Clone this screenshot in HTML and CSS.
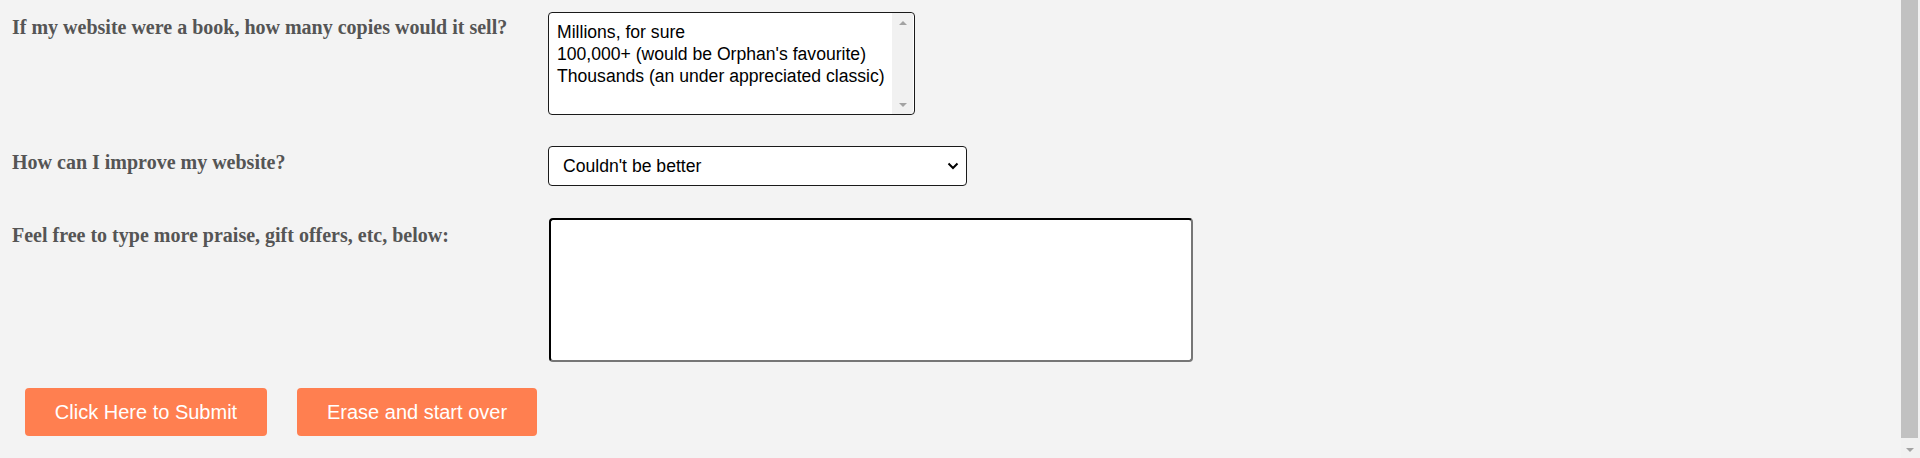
FILE: index.html
```html
<!DOCTYPE html>
<html lang="en">
<head>
<meta charset="utf-8">
<title>Feedback</title>
<link rel="stylesheet" href="styles.css">
</head>
<body>
<form class="form">
  <div class="row row-books">
    <label class="label" for="copies">If my website were a book, how many copies would it sell?</label>
    <div class="listbox-wrap">
      <select class="listbox" id="copies" multiple size="5">
        <option>Millions, for sure</option>
        <option>100,000+ (would be Orphan's favourite)</option>
        <option>Thousands (an under appreciated classic)</option>
      </select>
      <div class="list-scroll" aria-hidden="true">
        <span class="arrow arrow-up"></span>
        <span class="arrow arrow-down"></span>
      </div>
    </div>
  </div>
  <div class="row row-improve">
    <label class="label" for="improve">How can I improve my website?</label>
    <div class="dropdown-wrap">
      <select class="dropdown" id="improve">
        <option>Couldn't be better</option>
      </select>
      <svg class="chevron" width="12" height="8" viewBox="0 0 12 8" aria-hidden="true">
        <path d="M1.5 1.5 L6 6 L10.5 1.5" fill="none" stroke="#000" stroke-width="2"/>
      </svg>
    </div>
  </div>
  <div class="row row-praise">
    <label class="label" for="praise">Feel free to type more praise, gift offers, etc, below:</label>
    <textarea class="textbox" id="praise"></textarea>
  </div>
  <div class="actions">
    <button type="submit" class="btn btn-submit">Click Here to Submit</button>
    <button type="reset" class="btn btn-reset">Erase and start over</button>
  </div>
</form>
<div class="page-scroll" aria-hidden="true">
  <div class="page-thumb"></div>
  <span class="arrow arrow-down page-arrow"></span>
</div>
</body>
</html>
```

FILE: styles.css
```css
html {
  background: #f3f3f3;
}
body {
  margin: 0;
  background: #f3f3f3;
  font-family: "Liberation Serif", "Times New Roman", serif;
}
.form {
  padding: 12px 0 20px 12px;
  display: flex;
  flex-direction: column;
}
.row {
  display: flex;
  align-items: flex-start;
}
.label {
  width: 536px;
  flex: none;
  font-weight: bold;
  font-size: 20px;
  color: #555555;
  padding-top: 4px;
}
.row-improve { margin-top: 31px; }
.row-improve .label { padding-top: 5px; }
.row-praise { margin-top: 32px; }
.row-praise .label { padding-top: 6px; }

.listbox-wrap {
  position: relative;
  width: 367px;
  height: 103px;
}
.listbox {
  width: 367px;
  height: 103px;
  box-sizing: border-box;
  margin: 0;
  font-family: "Liberation Sans", Arial, sans-serif;
  font-size: 17.6px;
  color: #000;
  border: 1px solid #1a1a1a;
  border-radius: 4px;
  padding: 9px 6px 4px;
  background: #fff;
  overflow: hidden;
}
.list-scroll {
  position: absolute;
  top: 1px;
  right: 2px;
  width: 21px;
  bottom: 1px;
  background: #f1f1f1;
  border-radius: 0 3px 3px 0;
}
.arrow {
  position: absolute;
  left: 50%;
  width: 0;
  height: 0;
  margin-left: -4px;
  border-left: 4px solid transparent;
  border-right: 4px solid transparent;
}
.arrow-up {
  top: 8px;
  border-bottom: 4px solid #a3a3a3;
}
.arrow-down {
  bottom: 7px;
  border-top: 4px solid #a3a3a3;
}

.dropdown-wrap {
  position: relative;
  width: 419px;
  height: 40px;
}
.dropdown {
  -webkit-appearance: none;
  appearance: none;
  width: 419px;
  height: 40px;
  margin: 0;
  font-family: "Liberation Sans", Arial, sans-serif;
  font-size: 17.6px;
  color: #000;
  border: 1px solid #1a1a1a;
  border-radius: 4px;
  padding: 0 30px 0 14px;
  background: #fff;
}
.chevron {
  position: absolute;
  right: 8px;
  top: 16px;
  pointer-events: none;
}
.textbox {
  width: 644px;
  height: 144px;
  box-sizing: border-box;
  margin: 0 0 0 1px;
  border: 2px inset #767676;
  border-top-color: #1a1a1a;
  border-left-color: #1a1a1a;
  border-radius: 4px;
  background: #fff;
  resize: none;
}
.actions {
  display: flex;
  gap: 30px;
  margin-top: 26px;
  padding-left: 13px;
}
.btn {
  height: 48px;
  border: none;
  border-radius: 4px;
  background: #ff7f50;
  color: #fff;
  font-family: "Liberation Sans", Arial, sans-serif;
  font-size: 20px;
  padding: 0;
}
.btn-submit { width: 242px; }
.btn-reset { width: 240px; }

.page-scroll {
  position: fixed;
  top: 0;
  right: 0;
  bottom: 0;
  width: 19px;
  background: #f1f1f1;
}
.page-thumb {
  width: 17px;
  height: 438px;
  background: #c1c1c1;
}
.page-arrow {
  left: 9px;
  bottom: 6px;
  border-top-color: #a3a3a3;
}
```
